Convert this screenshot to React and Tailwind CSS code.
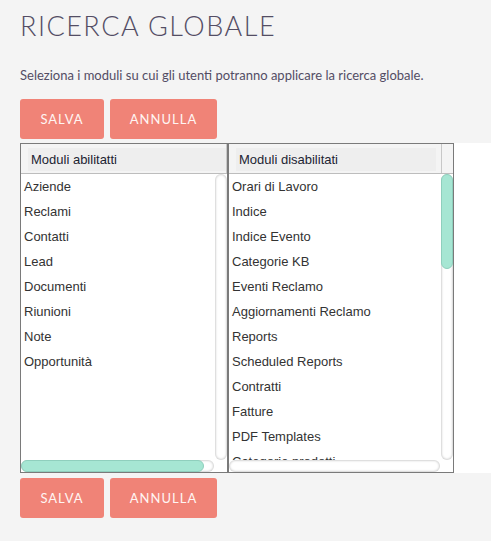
import React from "react";

const enabled = ["Aziende", "Reclami", "Contatti", "Lead", "Documenti", "Riunioni", "Note", "Opportunità"];
const disabled = [
  "Orari di Lavoro",
  "Indice",
  "Indice Evento",
  "Categorie KB",
  "Eventi Reclamo",
  "Aggiornamenti Reclamo",
  "Reports",
  "Scheduled Reports",
  "Contratti",
  "Fatture",
  "PDF Templates",
  "Categorie prodotti",
];

function Buttons() {
  return (
    <div className="flex gap-[6px]">
      <button className="h-10 w-[84px] rounded-[3px] bg-[#f08377] pt-[1px] text-[13px] tracking-[1px] text-[#fff5f3] font-['Lato',sans-serif]">
        SALVA
      </button>
      <button className="h-10 w-[107px] rounded-[3px] bg-[#f08377] pt-[1px] text-[13px] tracking-[1px] text-[#fff5f3] font-['Lato',sans-serif]">
        ANNULLA
      </button>
    </div>
  );
}

function Column({ title, items, vThumb, hThumb, width, tail }) {
  return (
    <div className="flex flex-col h-full" style={{ width }}>
      <div className="h-[30px] flex bg-[#f4f4f4] border-b border-[#bdbdbd]">
        <div className="flex-1 pt-1 pb-[2px] pl-[7px]">
          <div className="h-full bg-[#eeeeee] flex items-center pl-[3px] text-[13px] text-[#1d2433]">{title}</div>
        </div>
        {tail ? (
          <div className="flex">
            <div className="w-[5px]" />
            <div className="w-[12px] border-l border-[#c8c8c8]" />
          </div>
        ) : (
          <div className="w-[1px] border-l border-[#c8c8c8]" />
        )}
      </div>
      <div className="flex flex-1 min-h-0">
        <div className="flex-1 overflow-hidden pl-[3px] text-[13px] text-[#333]">
          {items.map((it) => (
            <div key={it} className="h-[25px] leading-[25px] whitespace-nowrap">
              {it}
            </div>
          ))}
        </div>
        <div className="w-[12px] rounded-full bg-white shadow-[inset_0_0_2px_1px_#d4d4d4] flex flex-col">
          {vThumb && <div className="h-[95px] rounded-full bg-[#a6e6d3] border border-[#8fcfbd]" />}
        </div>
      </div>
      <div className="h-[12px] flex">
        <div className="flex-1 rounded-full bg-white shadow-[inset_0_0_2px_1px_#d4d4d4] flex">
          {hThumb && <div className="w-[183px] rounded-full bg-[#a6e6d3] border border-[#8fcfbd]" />}
        </div>
        <div className="w-[13px]" />
      </div>
    </div>
  );
}

export default function App() {
  return (
    <div className="min-h-screen bg-[#f4f4f4] font-['Liberation_Sans',Arial,sans-serif]">
      <div className="pl-5 pt-[10px]">
        <h1 className="text-[27px] leading-[32px] font-light tracking-[1.5px] text-[#534d64] font-['Lato',sans-serif]">
          RICERCA GLOBALE
        </h1>
        <p className="mt-[25px] text-[13px] leading-[16px] text-[#534d64] font-['Lato',sans-serif]">
          Seleziona i moduli su cui gli utenti potranno applicare la ricerca globale.
        </p>
        <div className="mt-[16px]">
          <Buttons />
        </div>
      </div>
      <div className="mt-1 ml-5 bg-white">
        <div className="w-[434px] h-[330px] border border-[#7a7a7a] flex">
          <Column title="Moduli abilitatti" items={enabled} hThumb width={206} />
          <div className="w-[2px] bg-[#7a7a7a]" />
          <Column title="Moduli disabilitati" items={disabled} vThumb tail width={224} />
        </div>
      </div>
      <div className="pl-5 mt-[5px]">
        <Buttons />
      </div>
    </div>
  );
}
